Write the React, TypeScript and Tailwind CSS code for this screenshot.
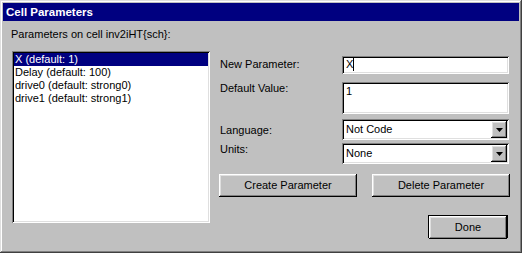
import React from 'react';

// Win95 style bevels
const raised =
  'shadow-[inset_-1px_-1px_#000,inset_1px_1px_#fff,inset_-2px_-2px_#808080,inset_2px_2px_#dfdfdf]';
const sunken =
  'shadow-[inset_1px_1px_#808080,inset_-1px_-1px_#fff,inset_2px_2px_#000,inset_-2px_-2px_#dfdfdf]';

const PARAMS = [
  'X (default: 1)',
  'Delay (default: 100)',
  'drive0 (default: strong0)',
  'drive1 (default: strong1)',
];

function Combo({ value }: { value: string }) {
  return (
    <div className={`w-[167px] h-[21px] bg-white p-[2px] flex ${sunken}`}>
      <div className="flex-1 pl-[2px] pt-[2px] leading-[13px]">{value}</div>
      <div className={`w-[16px] h-[17px] bg-[#c0c0c0] flex items-center justify-center ${raised}`}>
        <svg width="7" height="4" viewBox="0 0 7 4">
          <polygon points="0,0 7,0 3.5,4" fill="#000" />
        </svg>
      </div>
    </div>
  );
}

function Button({ label, className = '' }: { label: string; className?: string }) {
  return (
    <div
      className={`h-[23px] bg-[#c0c0c0] flex items-center justify-center leading-[13px] ${raised} ${className}`}
    >
      {label}
    </div>
  );
}

export default function App() {
  return (
    <div className="w-[522px] h-[253px] bg-[#c0c0c0] p-[3px] text-[11px] text-black font-['Liberation_Sans',Arial,sans-serif] shadow-[inset_-1px_-1px_#404040,inset_1px_1px_#dfdfdf,inset_-2px_-2px_#808080,inset_2px_2px_#fff]">
      {/* Title bar */}
      <div className="h-[18px] bg-[#000080] text-white font-bold text-[11.5px] leading-[18px] pl-[3px]">
        Cell Parameters
      </div>

      <div className="pl-[8px] pt-[7px]">
        <div className="leading-[13px]">Parameters on cell inv2iHT{'{sch}'}:</div>

        <div className="flex items-start mt-[10px] pl-[1px]">
          {/* Parameter list */}
          <div className={`w-[198px] h-[172px] bg-white p-[2px] ${sunken}`}>
            {PARAMS.map((p, i) => (
              <div
                key={p}
                className={`h-[13px] leading-[13px] pl-[1px] whitespace-nowrap ${
                  i === 0 ? 'bg-[#000080] text-white' : ''
                }`}
              >
                {p}
              </div>
            ))}
          </div>

          {/* Fields */}
          <div className="ml-[9px] w-[291px] flex flex-col">
            <div className="mt-[5px] flex justify-between items-start">
              <div className="mt-[2px] pl-[1px] leading-[13px]">New Parameter:</div>
              <div className={`w-[167px] h-[18px] bg-white p-[2px] mr-[1px] ${sunken}`}>
                <div className="pl-[2px] leading-[13px] flex">
                  <span>X</span>
                  <span className="inline-block w-px h-[13px] bg-black" />
                </div>
              </div>
            </div>

            <div className="mt-[8px] flex justify-between items-start">
              <div className="pl-[1px] leading-[13px]">Default Value:</div>
              <div className={`w-[167px] h-[32px] bg-white p-[2px] mr-[1px] ${sunken}`}>
                <div className="pl-[2px] pt-[1px] leading-[13px]">1</div>
              </div>
            </div>

            <div className="mt-[5px] flex justify-between items-start">
              <div className="mt-[5px] pl-[1px] leading-[13px]">Language:</div>
              <div className="mr-[1px]">
                <Combo value="Not Code" />
              </div>
            </div>

            <div className="mt-[3px] flex justify-between items-start">
              <div className="pl-[1px] leading-[13px]">Units:</div>
              <div className="mr-[1px]">
                <Combo value="None" />
              </div>
            </div>

            <div className="mt-[10px] flex justify-between">
              <Button label="Create Parameter" className="w-[138px]" />
              <Button label="Delete Parameter" className="w-[138px]" />
            </div>

            <div className="mt-[18px] flex justify-end">
              <div className="w-[80px] h-[23px] border border-black mr-[2px]">
                <Button label="Done" className="h-[21px]" />
              </div>
            </div>
          </div>
        </div>
      </div>
    </div>
  );
}
